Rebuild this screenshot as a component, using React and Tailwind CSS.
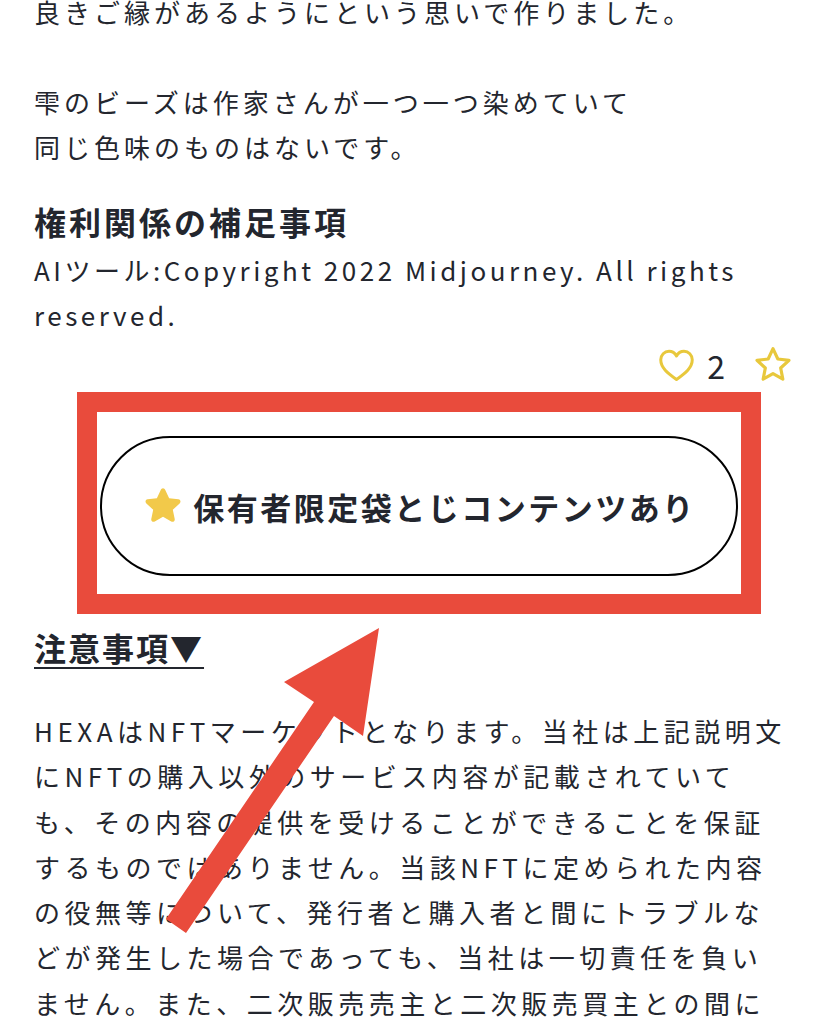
export default function App() {
  const font = { fontFamily: '"Noto Sans CJK JP", "Noto Sans", sans-serif' };
  return (
    <div className="relative w-[838px] h-[1024px] overflow-hidden bg-white text-[#23262e]" style={font}>
      <div className="px-[34px]">
        <p className="-mt-[11px] text-[26px] leading-[45px] tracking-[4px]">
          良きご縁があるようにという思いで作りました。
          <br />
          <br />
          雫のビーズは作家さんが一つ一つ染めていて
          <br />
          同じ色味のものはないです。
        </p>
        <h2 className="mt-[30px] text-[32px] leading-[45px] font-bold tracking-[3px]">権利関係の補足事項</h2>
        <p className="mt-[3px] text-[26px] leading-[45px] tracking-[3.5px]">
          AIツール:Copyright 2022 Midjourney. All rights
          <br />
          reserved.
        </p>
        <div className="mt-[8px] h-[40px] flex items-center justify-end pr-[11px]">
          <svg width="37" height="33" viewBox="0 0 24 22" fill="none" stroke="#e8c83c" strokeWidth="2" strokeLinejoin="round">
            <path d="M12 20.3 C 6 16, 1.5 12.5, 1.5 7.2 C 1.5 4, 4 1.5, 7 1.5 C 9.2 1.5, 11 2.8, 12 4.6 C 13 2.8, 14.8 1.5, 17 1.5 C 20 1.5, 22.5 4, 22.5 7.2 C 22.5 12.5, 18 16, 12 20.3 Z" />
          </svg>
          <span className="ml-[12px] text-[32px] leading-none">2</span>
          <svg className="ml-[28px]" width="40" height="40" viewBox="0 0 24 24" fill="none" stroke="#e8c83c" strokeWidth="1.9" strokeLinejoin="round">
            <path d="M12 2.2 L14.9 8.4 L21.6 9.2 L16.6 13.8 L17.9 20.5 L12 17.2 L6.1 20.5 L7.4 13.8 L2.4 9.2 L9.1 8.4 Z" />
          </svg>
        </div>
        <div className="mt-[7px] mx-auto w-[684px] border-[20px] border-[#e94b3c] pt-[24px] pb-[18px] px-[3px]">
          <div className="h-[140px] w-full rounded-full border-2 border-black flex items-center justify-center">
            <svg width="42" height="42" viewBox="0 0 24 24">
              <path d="M12 1.8 C12.6 1.8 13 2.2 13.3 2.8 L15.5 7.6 L20.8 8.2 C22 8.4 22.4 9.7 21.5 10.5 L17.6 14.1 L18.7 19.4 C18.9 20.6 17.7 21.4 16.7 20.8 L12 18.1 L7.3 20.8 C6.3 21.4 5.1 20.6 5.3 19.4 L6.4 14.1 L2.5 10.5 C1.6 9.7 2 8.4 3.2 8.2 L8.5 7.6 L10.7 2.8 C11 2.2 11.4 1.8 12 1.8 Z" fill="#f2c94a" />
            </svg>
            <span className="ml-[9px] text-[31px] font-bold tracking-[2.5px] leading-none">保有者限定袋とじコンテンツあり</span>
          </div>
        </div>
        <h3 className="mt-[11px] text-[32px] leading-[45px] font-bold tracking-[2px]">
          <span className="underline decoration-2 underline-offset-[6px]">注意事項▼</span>
        </h3>
        <p className="mt-[38px] text-[26px] leading-[45.3px] tracking-[4.5px] whitespace-nowrap">
          HEXAはNFTマーケットとなります。当社は上記説明文
          <br />
          にNFTの購入以外のサービス内容が記載されていて
          <br />
          も、その内容の提供を受けることができることを保証
          <br />
          するものではありません。当該NFTに定められた内容
          <br />
          の役無等について、発行者と購入者と間にトラブルな
          <br />
          どが発生した場合であっても、当社は一切責任を負い
          <br />
          ません。また、二次販売売主と二次販売買主との間に
          <br />
          トラブルなどが発生した場合も同様です。
        </p>
      </div>
      <svg className="absolute left-0 top-0 pointer-events-none" width="838" height="1024" viewBox="0 0 838 1024">
        <polygon
          points="166,919 314,702 284,682 379,628 363,736 334,716 186,933"
          fill="#e94b3c"
        />
      </svg>
    </div>
  );
}
